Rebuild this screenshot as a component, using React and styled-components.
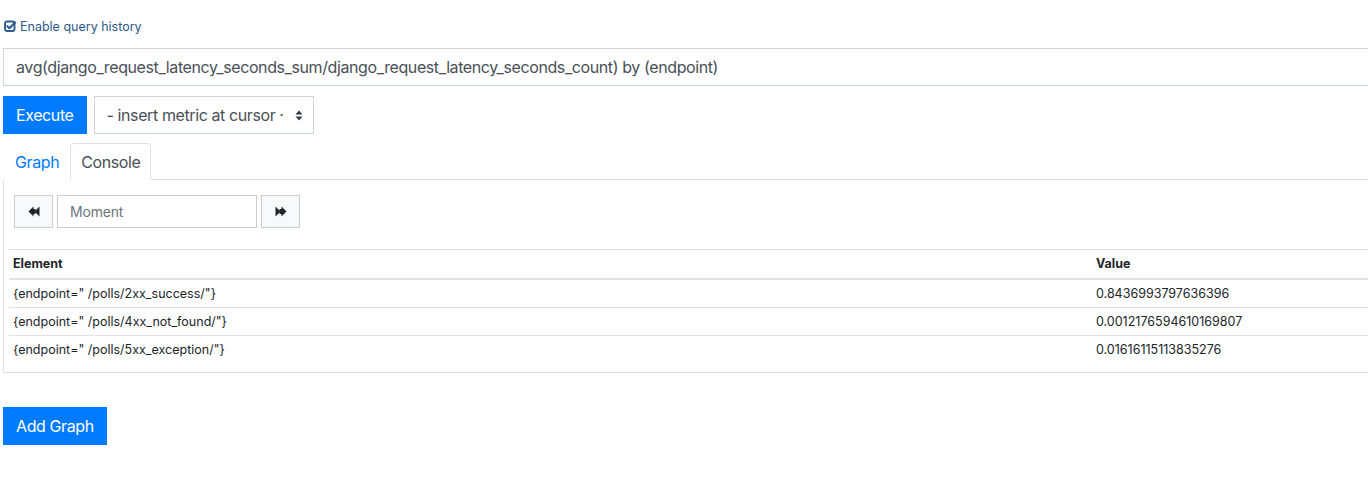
import React from 'react';
import styled, { createGlobalStyle } from 'styled-components';

const GlobalStyle = createGlobalStyle`
  html, body {
    margin: 0;
    padding: 0;
    background: #fff;
    overflow: hidden;
  }
  body {
    font-family: Inter, "Liberation Sans", sans-serif;
    color: #212529;
  }
`;

const rows = [
  { element: '{endpoint=" /polls/2xx_success/"}', value: '0.8436993797636396' },
  { element: '{endpoint=" /polls/4xx_not_found/"}', value: '0.0012176594610169807' },
  { element: '{endpoint=" /polls/5xx_exception/"}', value: '0.01616115113835276' },
];

const CheckIcon = () => (
  <svg width="12" height="12" viewBox="0 0 12 12">
    <rect x="1" y="1.5" width="9.5" height="9.5" rx="2" fill="none" stroke="#2c5a8c" strokeWidth="1.9" />
    <path d="M3.4 6.2 L5.4 8.2 L11 2.4" fill="none" stroke="#2c5a8c" strokeWidth="2.1" strokeLinecap="round" strokeLinejoin="round" />
  </svg>
);

const SortArrows = () => (
  <svg width="8" height="11" viewBox="0 0 8 11">
    <path d="M4 0.5 L7.5 4.5 H0.5 Z" fill="#343a40" />
    <path d="M4 10.5 L7.5 6.5 H0.5 Z" fill="#343a40" />
  </svg>
);

const Rewind = ({ flip }) => (
  <svg width="12" height="11" viewBox="0 0 12 11" style={flip ? { transform: 'scaleX(-1)' } : undefined}>
    <path d="M5.5 0.5 L0.5 5.5 L5.5 10.5 Z" fill="#212529" />
    <path d="M11.5 0.5 L6.5 5.5 L11.5 10.5 Z" fill="#212529" />
    <rect x="5" y="3" width="2.5" height="5" fill="#212529" />
  </svg>
);

export default function App() {
  return (
    <>
      <GlobalStyle />
      <SPage>
        <SHistory>
          <CheckIcon />
          <span>Enable query history</span>
        </SHistory>

        <SExpression>avg(django_request_latency_seconds_sum/django_request_latency_seconds_count) by (endpoint)</SExpression>

        <SActions>
          <SPrimaryButton>Execute</SPrimaryButton>
          <SSelect>
            <span>- insert metric at cursor ·</span>
            <SortArrows />
          </SSelect>
        </SActions>

        <STabs>
          <STab>Graph</STab>
          <STab active>Console</STab>
        </STabs>

        <SPane>
          <SMomentRow>
            <SLightButton><Rewind /></SLightButton>
            <SMomentInput>Moment</SMomentInput>
            <SLightButton><Rewind flip /></SLightButton>
          </SMomentRow>

          <STable>
            <thead>
              <tr>
                <SHead $width={1075}>Element</SHead>
                <SHead>Value</SHead>
              </tr>
            </thead>
            <tbody>
              {rows.map((r) => (
                <tr key={r.element}>
                  <SCell>{r.element}</SCell>
                  <SCell>{r.value}</SCell>
                </tr>
              ))}
            </tbody>
          </STable>
        </SPane>

        <SAddButton>Add Graph</SAddButton>
      </SPage>
    </>
  );
}

const SPage = styled.div`
  width: 1420px;
  padding: 15px 0 40px 3px;
`;

const SHistory = styled.div`
  display: flex;
  align-items: center;
  gap: 4px;
  padding-left: 1px;
  height: 22px;
  font-size: 12.5px;
  color: #2c5a8c;
`;

const SExpression = styled.div`
  margin-top: 11px;
  height: 38px;
  box-sizing: border-box;
  border: 1px solid #ced4da;
  padding: 0 12px;
  display: flex;
  align-items: center;
  font-size: 16px;
  letter-spacing: -0.4px;
  color: #495057;
  white-space: nowrap;
`;

const SActions = styled.div`
  display: flex;
  gap: 7px;
  margin-top: 10px;
`;

const SPrimaryButton = styled.button`
  height: 38px;
  padding: 0 12px;
  border: 1px solid #007bff;
  background: #007bff;
  color: #fff;
  font-family: inherit;
  font-size: 16px;
  letter-spacing: -0.4px;
  border-radius: 0;
`;

const SSelect = styled.div`
  width: 220px;
  height: 38px;
  box-sizing: border-box;
  border: 1px solid #ced4da;
  padding: 0 10px 0 12px;
  display: flex;
  align-items: center;
  justify-content: space-between;
  font-size: 16px;
  letter-spacing: -0.4px;
  color: #495057;
  white-space: nowrap;
  overflow: hidden;
`;

const STabs = styled.div`
  display: flex;
  margin-top: 9px;
  border-bottom: 1px solid #dee2e6;
  padding-left: 1px;
`;

const STab = styled.div`
  padding: 0 10px;
  height: 35px;
  display: flex;
  align-items: center;
  font-size: 16px;
  letter-spacing: -0.4px;
  margin-bottom: -1px;
  border: 1px solid ${(p) => (p.active ? '#dee2e6' : 'transparent')};
  border-bottom-color: ${(p) => (p.active ? '#fff' : 'transparent')};
  border-radius: 4px 4px 0 0;
  color: ${(p) => (p.active ? '#495057' : '#007bff')};
  background: #fff;
`;

const SPane = styled.div`
  border: 1px solid #dee2e6;
  border-top: none;
  padding: 15px 0 9px 5px;
`;

const SMomentRow = styled.div`
  display: flex;
  gap: 4px;
  padding-left: 5px;
`;

const SLightButton = styled.div`
  width: 39px;
  height: 33px;
  box-sizing: border-box;
  border: 1px solid #ccc;
  background: #f8f9fa;
  display: flex;
  align-items: center;
  justify-content: center;
`;

const SMomentInput = styled.div`
  width: 200px;
  height: 33px;
  box-sizing: border-box;
  border: 1px solid #ccc;
  padding: 0 12px;
  display: flex;
  align-items: center;
  font-size: 14px;
  letter-spacing: -0.2px;
  color: #6c757d;
`;

const STable = styled.table`
  margin-top: 21px;
  width: 1410px;
  border-collapse: collapse;
  font-size: 12.5px;
  color: #212529;
`;

const SHead = styled.th`
  text-align: left;
  font-weight: 700;
  padding: 4px 4px;
  height: 20px;
  line-height: 20px;
  border-top: 1px solid #dee2e6;
  border-bottom: 2px solid #dee2e6;
  width: ${(p) => (p.$width ? `${p.$width}px` : 'auto')};
`;

const SCell = styled.td`
  padding: 4px 4px;
  height: 19px;
  line-height: 19px;
  border-top: 1px solid #dee2e6;
`;

const SAddButton = styled(SPrimaryButton)`
  display: block;
  margin-top: 34px;
`;
